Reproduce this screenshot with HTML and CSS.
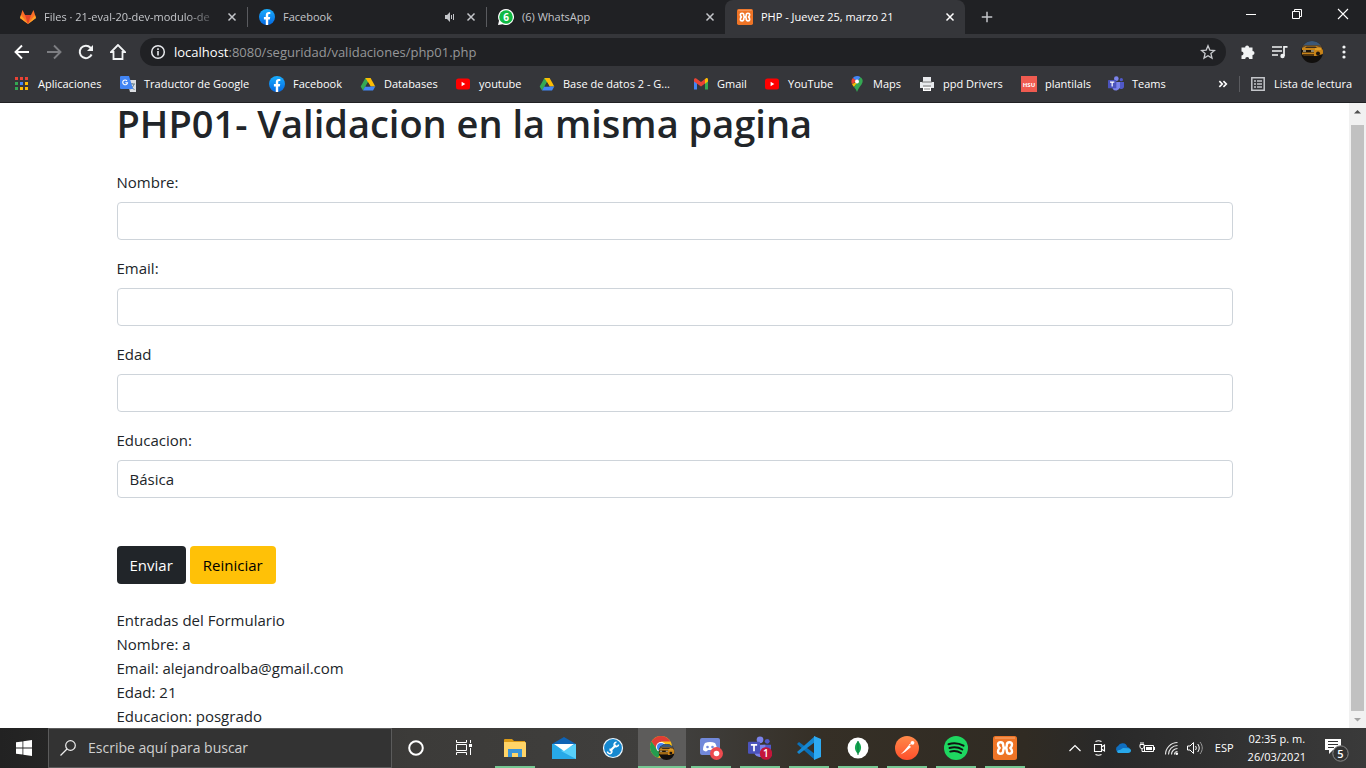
FILE: index.html
```
<!DOCTYPE html>
<html lang="es">
<head>
<meta charset="utf-8">
<meta name="viewport" content="width=device-width, initial-scale=1">
<title>PHP - Juevez 25, marzo 21</title>
<link rel="stylesheet" href="styles.css">
</head>
<body>
<svg class="defs" aria-hidden="true">
  <defs>
    <linearGradient id="fbg" x1="0" y1="0" x2="0" y2="1"><stop offset="0" stop-color="#19aefe"/><stop offset="1" stop-color="#0568e1"/></linearGradient>
    <linearGradient id="pmg" x1="0" y1="0" x2="0" y2="1"><stop offset="0" stop-color="#ff8a4a"/><stop offset="1" stop-color="#ff4f2b"/></linearGradient>
    <symbol id="close" viewBox="0 0 16 16"><path d="M4 4l8 8M12 4l-8 8" stroke="currentColor" stroke-width="1.7"/></symbol>
    <symbol id="fb" viewBox="0 0 16 16"><circle cx="8" cy="8" r="8" fill="url(#fbg)"/><path d="M6.8 16v-5.6H4.9V8h1.9V6.3c0-2.1 1.2-3.2 3-3.2.7 0 1.5.1 1.5.1v1.9h-.9c-.9 0-1.2.5-1.2 1.1V8h2l-.4 2.4H9.2V16z" fill="#fff"/></symbol>
    <symbol id="drive" viewBox="0 0 16 16"><path d="M5.400 2h5.200L5.300 10.700 3 14.500.7 10.600z" fill="#34a853"/><path d="M5.400 2h5.200L15.300 10.600h-4.600z" fill="#fbbc04"/><path d="M5.200 10.600h10.100L13 14.500H3z" fill="#4285f4"/><path d="M8 6.300l2.500 4.300h-5z" fill="#35363a"/></symbol>
    <symbol id="yt" viewBox="0 0 16 16"><rect x="1" y="2.500" width="14" height="11" rx="2.500" fill="#f00"/><path d="M6.600 5.800v4.400L10.300 8z" fill="#fff"/></symbol>
    <symbol id="xampp" viewBox="0 0 24 24"><rect width="24" height="24" rx="2.500" fill="#ee7426"/><path d="M2 2h20" stroke="#f7ad7a"/><path d="M10.200 9.300c0-2-.9-3-2.600-3S5 7.200 5 8.800c0 1.600.8 2.500 1.700 3.200C5.800 12.700 5 13.600 5 15.200c0 1.600.9 2.600 2.600 2.600s2.600-1 2.600-3M13.800 9.300c0-2 .9-3 2.600-3s2.600.9 2.600 2.500c0 1.600-.8 2.500-1.700 3.200.9.700 1.700 1.600 1.700 3.200 0 1.600-.9 2.600-2.600 2.600s-2.600-1-2.600-3M10.200 9c0 1.700.5 3 1.800 3s1.800-1.300 1.800-3M10.200 15c0-1.700.5-3 1.800-3s1.800 1.300 1.800 3" fill="none" stroke="#fff" stroke-width="2.400" stroke-linejoin="round"/></symbol>
    <symbol id="teams" viewBox="0 0 24 24"><circle cx="12.500" cy="4" r="3.500" fill="#7b83eb"/><circle cx="20" cy="5.500" r="2.500" fill="#5059c9"/><path d="M16 9h8v7a4 4 0 0 1-6 3z" fill="#5059c9"/><path d="M7 9h11v8a6 6 0 0 1-11 2z" fill="#7b83eb"/><rect y="6" width="12.500" height="12.500" rx="1" fill="#4b53bc"/><path d="M3 9.300h6.500M6.250 9.300v6.500" stroke="#fff" stroke-width="1.800"/></symbol>
    <clipPath id="disc"><circle cx="11" cy="11" r="11"/></clipPath>
    <symbol id="car" viewBox="0 0 22 22"><g clip-path="url(#disc)"><path d="M0 0h22v22H0z" fill="#110f0d"/><path d="M0 0h22v4.500H0z" fill="#3c5878"/><path d="M0 4h22v3H0z" fill="#5b4a35"/><path d="M1 7l4-2h10l5 1.500 2 2V13l-7 2H3l-2-2z" fill="#c98419"/><path d="M5.500 5.500h9L16 7H4z" fill="#3a2c1c"/><path d="M1 9h12v2.500H1z" fill="#1b140d"/><path d="M2 10h3M10 10h3" stroke="#fff1c8"/><path d="M14 8h6" stroke="#f5b93b"/><path d="M2 14h11" stroke="#2a1c0e" stroke-width="1.500"/><circle cx="17" cy="12.500" r="2" fill="#1b140d"/></g></symbol>
  </defs>
</svg>

<header class="browser">
  <div class="tabstrip">
    <div class="tab">
      <svg class="fav" viewBox="0 0 16 16"><path d="M8 15L0 9 2.500 1 5 6h6l2.500-5L16 9z" fill="#fc6d26"/><path d="M8 15L5 6h6z" fill="#e24329"/><path d="M8 15L0 9l1-3zM8 15l8-6-1-3z" fill="#fca326"/></svg>
      <span class="tab-title fade">Files · 21-eval-20-dev-modulo-de</span>
      <button class="icon-btn" aria-label="Cerrar pestaña"><svg class="x"><use href="#close"/></svg></button>
    </div>
    <div class="tab divided">
      <svg class="fav"><use href="#fb"/></svg>
      <span class="tab-title">Facebook</span>
      <svg class="sound" viewBox="0 0 12 12"><path d="M1 4h2l3-3v10L3 8H1z" fill="#c4c6ca"/><path d="M7.500 4v4M9.500 3v6" stroke="#c4c6ca"/></svg>
      <button class="icon-btn" aria-label="Cerrar pestaña"><svg class="x"><use href="#close"/></svg></button>
    </div>
    <div class="tab divided">
      <svg class="fav" viewBox="0 0 16 16"><path d="M8 0a8 8 0 1 1-3.500 15.200L0 16l1-4.200A8 8 0 0 1 8 0z" fill="#fff"/><circle cx="8" cy="8" r="6.800" fill="#10b943"/><text x="8" y="11.500" text-anchor="middle" class="wa">6</text></svg>
      <span class="tab-title">(6) WhatsApp</span>
      <button class="icon-btn" aria-label="Cerrar pestaña"><svg class="x"><use href="#close"/></svg></button>
    </div>
    <div class="tab active">
      <svg class="fav"><use href="#xampp"/></svg>
      <span class="tab-title">PHP - Juevez 25, marzo 21</span>
      <button class="icon-btn" aria-label="Cerrar pestaña"><svg class="x"><use href="#close"/></svg></button>
    </div>
    <button class="icon-btn new-tab" aria-label="Nueva pestaña"><svg class="x" viewBox="0 0 16 16"><path d="M8 2v12M2 8h12" stroke="currentColor" stroke-width="1.700"/></svg></button>
    <div class="window-controls">
      <button class="icon-btn" aria-label="Minimizar"><svg viewBox="0 0 12 12"><path d="M1 6.500h10" stroke="#fff"/></svg></button>
      <button class="icon-btn" aria-label="Restaurar"><svg viewBox="0 0 12 12"><path d="M1.500 3.500h7v7h-7zM3.500 3.500v-2h7v7h-2" fill="none" stroke="#fff"/></svg></button>
      <button class="icon-btn" aria-label="Cerrar"><svg viewBox="0 0 12 12"><path d="M1 1l10 10M11 1L1 11" stroke="#fff" stroke-width="1.100"/></svg></button>
    </div>
  </div>

  <div class="toolbar">
    <button class="icon-btn" aria-label="Atrás"><svg viewBox="0 0 16 16"><path d="M15 8H2M8 1.500L1.500 8 8 14.500" fill="none" stroke="#fff" stroke-width="1.900"/></svg></button>
    <button class="icon-btn" aria-label="Adelante"><svg viewBox="0 0 16 16"><path d="M1 8h13M8 1.500L14.500 8 8 14.500" fill="none" stroke="#7d7e82" stroke-width="1.900"/></svg></button>
    <button class="icon-btn" aria-label="Recargar"><svg viewBox="0 0 16 16"><path d="M13.600 10.500A6.200 6.200 0 1 1 12.500 3.700L14 5.200" fill="none" stroke="#f1f3f4" stroke-width="2"/><path d="M15 1v6H9z" fill="#f1f3f4"/></svg></button>
    <button class="icon-btn" aria-label="Inicio"><svg viewBox="0 0 16 16"><path d="M8 1L1 8h2.500v7h9V8H15z" fill="none" stroke="#f1f3f4" stroke-width="1.800"/></svg></button>
    <div class="omnibox">
      <svg viewBox="0 0 16 16"><circle cx="8" cy="8" r="6.300" fill="none" stroke="#e8eaed" stroke-width="1.500"/><path d="M8 7v4.500M8 4.300v1.600" stroke="#e8eaed" stroke-width="1.600"/></svg>
      <span class="url"><b>localhost</b>:8080/seguridad/validaciones/php01.php</span>
      <button class="icon-btn" aria-label="Marcar página"><svg viewBox="0 0 16 16"><path d="M8 1.800l1.800 4.300 4.700.4-3.600 3 1.100 4.600L8 11.700l-4 2.400 1.100-4.600-3.600-3 4.700-.4z" fill="none" stroke="#c8cace" stroke-width="1.300"/></svg></button>
    </div>
    <div class="extensions">
      <button class="icon-btn" aria-label="Extensiones"><svg viewBox="0 0 16 16"><path d="M1.500 3.500h3.600a2 2 0 1 1 4 0h3.400v3.600a2 2 0 1 1 0 4V15H9.200a2 2 0 0 0-4 0H1.500v-3.600a2 2 0 0 0 0-4z" fill="#f1f3f4"/></svg></button>
      <button class="icon-btn" aria-label="Controles multimedia"><svg viewBox="0 0 16 16"><path d="M0 3h10M0 7h10M0 11h6" stroke="#f1f3f4" stroke-width="1.500"/><circle cx="10.500" cy="12" r="2.200" fill="#f1f3f4"/><path d="M12 12V2.800h3.500" fill="none" stroke="#f1f3f4" stroke-width="1.700"/></svg></button>
      <button class="icon-btn avatar" aria-label="Perfil"><svg><use href="#car"/></svg></button>
      <button class="icon-btn" aria-label="Menú"><svg viewBox="0 0 16 16" fill="#f1f3f4"><circle cx="8" cy="3" r="1.600"/><circle cx="8" cy="8" r="1.600"/><circle cx="8" cy="13" r="1.600"/></svg></button>
    </div>
  </div>

  <nav class="bookmarks" aria-label="Marcadores">
    <div class="bookmark-list">
      <a href="#"><svg viewBox="0 0 16 16"><path fill="#ea4335" d="M1 1h3v3H1zM6 1h3v3H6zM11 1h3v3h-3z"/><path fill="#34a853" d="M1 6h3v3H1zM1 11h3v3H1z"/><path fill="#4285f4" d="M6 6h3v3H6z"/><path fill="#fbbc04" d="M11 6h3v3h-3zM6 11h3v3H6zM11 11h3v3h-3z"/></svg>Aplicaciones</a>
      <a href="#"><svg viewBox="0 0 16 16"><path d="M7 4h9v12H10z" fill="#dadce0"/><path d="M9 8h6M12 7v1M14 8c-1 3-2 4-4 5M10.500 9.500c1 2 2 3 4 4" stroke="#607d8b" fill="none"/><path d="M1 0h8l4 13H1a1 1 0 0 1-1-1V1a1 1 0 0 1 1-1z" fill="#4285f4"/><path d="M7 4.800a2.400 2.400 0 1 0 .5 2H5.300" stroke="#fff" stroke-width="1.100" fill="none"/></svg>Traductor de Google</a>
      <a href="#"><svg><use href="#fb"/></svg>Facebook</a>
      <a href="#"><svg><use href="#drive"/></svg>Databases</a>
      <a href="#"><svg><use href="#yt"/></svg>youtube</a>
      <a href="#"><svg><use href="#drive"/></svg>Base de datos 2 - G...</a>
      <a href="#"><svg viewBox="0 0 16 16"><path d="M1 4v9.500h3V7z" fill="#4285f4"/><path d="M15 4v9.500h-3V7z" fill="#34a853"/><path d="M1 3.500c0-1 1.200-1.800 2.300-1L8 6l4-3v4.500l-4 3-7-5z" fill="#ea4335"/><path d="M12 3l.8-.6c1-.7 2.200 0 2.200 1.100v2l-3 2.200z" fill="#fbbc04"/></svg>Gmail</a>
      <a href="#"><svg><use href="#yt"/></svg>YouTube</a>
      <a href="#"><svg viewBox="0 0 16 16"><path d="M8 0a5.500 5.500 0 0 0-4.200 2L8 6l3.500-4.700A5 5 0 0 0 8 0z" fill="#4285f4"/><path d="M3.800 2a5.500 5.500 0 0 0-.8 6l5-3z" fill="#ea4335"/><path d="M3 8c.5 1 1 2 2 3l5-6z" fill="#fbbc04"/><path d="M11.500 1.300c3 2 2.500 5 1 7.200S9.500 12 8 16c-.8-2-1.600-3.500-3-5z" fill="#34a853"/><circle cx="8" cy="5.500" r="2" fill="#fff"/></svg>Maps</a>
      <a href="#"><svg viewBox="0 0 16 16"><path d="M4 1h8v5H4zM1 6h14v6H1z" fill="#e8eaed"/><path d="M3 6h10M4 10h8" stroke="#777"/><path d="M4 11h8v4H4z" fill="#fff"/><path d="M5 13h6" stroke="#888"/></svg>ppd Drivers</a>
      <a href="#"><svg viewBox="0 0 16 16"><rect width="16" height="16" fill="#ef5b50"/><text x="8" y="10.500" text-anchor="middle" class="hsu">HSU</text></svg>plantilals</a>
      <a href="#"><svg><use href="#teams"/></svg>Teams</a>
    </div>
    <button class="icon-btn more" aria-label="Más marcadores"><svg viewBox="0 0 12 12"><path d="M2 3.500L4.500 6 2 8.500M5.500 3.500L8 6 5.500 8.500" fill="none" stroke="#fff" stroke-width="1.400"/></svg></button>
    <a href="#" class="reading"><svg viewBox="0 0 16 16"><path d="M1.800 1.800h12.400v12.400H1.800z" fill="none" stroke="#c4c6ca" stroke-width="1.500"/><path d="M4 5h2M7 5h5M4 8h2M7 8h5M4 11h2M7 11h5" stroke="#c4c6ca" stroke-width="1.400"/></svg>Lista de lectura</a>
  </nav>
</header>

<div class="viewport">
  <main class="page">
    <div class="container">
      <h1>PHP01- Validacion en la misma pagina</h1>
      <form onsubmit="return false">
        <div class="field"><label for="nombre">Nombre:</label><input id="nombre" type="text"></div>
        <div class="field"><label for="email">Email:</label><input id="email" type="text"></div>
        <div class="field"><label for="edad">Edad</label><input id="edad" type="text"></div>
        <div class="field"><label for="educacion">Educacion:</label>
          <select id="educacion"><option>Básica</option></select></div>
        <div class="actions">
          <button type="submit" class="btn dark">Enviar</button>
          <button type="reset" class="btn warning">Reiniciar</button>
        </div>
      </form>
      <div class="result">
        <div>Entradas del Formulario</div>
        <div>Nombre: a</div>
        <div>Email: alejandroalba@gmail.com</div>
        <div>Edad: 21</div>
        <div>Educacion: posgrado</div>
      </div>
    </div>
  </main>
  <div class="scrollbar" aria-hidden="true">
    <svg viewBox="0 0 17 17"><path d="M5 10.500h7L8.500 7z" fill="#505050"/></svg>
    <div class="thumb"></div>
    <svg viewBox="0 0 17 17"><path d="M5 7h7l-3.500 3.500z" fill="#a3a3a3"/></svg>
  </div>
</div>

<footer class="taskbar">
  <button class="icon-btn start" aria-label="Inicio"><svg viewBox="0 0 16 16" fill="#fff"><path d="M0 2.300l6.500-.9v6.200H0zM7.300 1.300L16 0v7.600H7.300zM0 8.400h6.500v6.200L0 13.700zM7.300 8.400H16V16l-8.700-1.300z"/></svg></button>
  <label class="search">
    <svg viewBox="0 0 16 16"><circle cx="10.500" cy="5.500" r="4.800" fill="none" stroke="#eee" stroke-width="1.200"/><path d="M7 9L.5 15.500" stroke="#eee" stroke-width="1.300"/></svg>
    <input type="text" placeholder="Escribe aquí para buscar" aria-label="Buscar">
  </label>
  <div class="system-apps">
    <button class="app" aria-label="Cortana"><svg viewBox="0 0 24 24"><circle cx="12" cy="12" r="6.800" fill="none" stroke="#fff" stroke-width="2"/></svg></button>
    <button class="app" aria-label="Vista de tareas"><svg viewBox="0 0 24 24"><path d="M4.500 4v2.500h10V4M4.500 19v-2.500h10V19M4.500 8.500h10v6h-10zM18.500 4v3M18.500 12v7" fill="none" stroke="#fff"/><path d="M17 8h3v3h-3z" fill="#fff"/></svg></button>
  </div>
  <div class="apps">
    <button class="app running" aria-label="Explorador"><svg viewBox="0 0 24 24"><path d="M1 4a1 1 0 0 1 1-1h7l2 2H22v5H1z" fill="#dc9b16"/><path d="M1 6h21a1 1 0 0 1 1 1v14H1z" fill="#ffd467"/><path d="M5 13h14v8h-4v-4H9v4H5z" fill="#3a94d8"/></svg></button>
    <button class="app" aria-label="Correo"><svg viewBox="0 0 24 24"><path d="M0 8l12-7 12 7z" fill="#0f63b5"/><path d="M0 8h24v15H0z" fill="#27a9e8"/><path d="M24 8v15L9 15z" fill="#58d0fa"/><path d="M2 8h20l-10 7z" fill="#fff"/></svg></button>
    <button class="app" aria-label="Herramientas"><svg viewBox="0 0 24 24"><circle cx="12" cy="12" r="9.500" fill="#1588d0" stroke="#eef6fb" stroke-width="1.200"/><path d="M9 15l6-6" stroke="#fff" stroke-width="2.200"/><path d="M17.500 8.500a2.200 2.200 0 1 1-2-2.200M6.500 15.500a2.200 2.200 0 1 0 2-2.200" fill="none" stroke="#fff" stroke-width="1.500"/></svg></button>
    <button class="app running current" aria-label="Google Chrome"><svg viewBox="0 0 26 24"><circle cx="12" cy="11" r="11" fill="#fbc116"/><path d="M2.500 5.500a11 11 0 0 1 19 0H12L8 14z" fill="#df3d35"/><path d="M2.500 5.500L9 15l4 1-4 5.600A11 11 0 0 1 2.500 5.500z" fill="#249b50"/><circle cx="12" cy="11" r="5" fill="#fff"/><circle cx="12" cy="11" r="4" fill="#4285f4"/><use href="#car" x="9.500" y="8" width="16" height="16"/></svg></button>
    <button class="app running" aria-label="Discord"><svg viewBox="0 0 24 24"><path d="M3 2h16a2 2 0 0 1 2 2v18l-4-3H3a2 2 0 0 1-2-2V4a2 2 0 0 1 2-2z" fill="#7289da"/><path d="M6 7c3-1.500 7-1.500 10 0 1.500 2 2 5 2 7-1 1-3 2-4 1l-1-1H9l-1 1c-1 1-3 0-4-1 0-2 .5-5 2-7z" fill="#fff"/><circle cx="8.500" cy="11" r="1.300" fill="#7289da"/><circle cx="13.500" cy="11" r="1.300" fill="#7289da"/><circle cx="17.500" cy="17.500" r="6.500" fill="#ed4b4f"/><circle cx="17.500" cy="17.500" r="2.800" fill="#fff"/></svg></button>
    <button class="app running" aria-label="Teams"><svg viewBox="0 0 26 26"><use href="#teams" width="25" height="25"/><circle cx="19.500" cy="19" r="6.800" fill="#c4153a"/><text x="19.500" y="23" text-anchor="middle" class="badge-text">1</text></svg></button>
    <button class="app running" aria-label="Visual Studio Code"><svg viewBox="0 0 24 24"><path d="M0 8l2-2L18 18v6z" fill="#0a70b8"/><path d="M0 16l2 2L18 6V0z" fill="#1688d2"/><path d="M17 0v24l7-3V3z" fill="#2daaf2"/></svg></button>
    <button class="app running" aria-label="MongoDB"><svg viewBox="0 0 24 24"><circle cx="12" cy="12" r="10.500" fill="#fff"/><path d="M12 5c4.200 4.500 4 9 0 13-4-4-4.200-8.500 0-13z" fill="#13a852"/><path d="M12 5v14" stroke="#0b7b3d"/></svg></button>
    <button class="app running" aria-label="Postman"><svg viewBox="0 0 24 24"><circle cx="12" cy="12" r="12" fill="url(#pmg)"/><path d="M5.500 18.500L9 15l5-6 2 2-6 5z" fill="#fff"/><path d="M14 9l2.500-1.500" stroke="#fff"/><circle cx="17.500" cy="6.800" r="1.900" fill="#fff"/></svg></button>
    <button class="app running" aria-label="Spotify"><svg viewBox="0 0 24 24"><circle cx="12" cy="12" r="12" fill="#1ed760"/><path d="M4.500 8.200c5-1.500 10.500-1 15 1.500M5.500 12c4.300-1.200 9-.8 12.800 1.500M6.200 15.600c3.600-1 7.500-.6 10.800 1.400" fill="none" stroke="#111" stroke-width="2" stroke-linecap="round"/></svg></button>
    <button class="app running" aria-label="XAMPP"><svg><use href="#xampp"/></svg></button>
  </div>
  <div class="tray">
    <svg viewBox="0 0 16 16"><path d="M2.500 11L8 5.500 13.500 11" fill="none" stroke="#fff" stroke-width="1.200"/></svg>
    <svg viewBox="0 0 16 16"><path d="M3.500 4.500h7v7h-7zM10.500 7l3-2v6l-3-2M4.500 1.500c2-1 4-1 6 0M4.500 14.500c2 1 4 1 6 0" fill="none" stroke="#fff" stroke-width="1.100"/></svg>
    <svg viewBox="0 0 16 16"><path d="M3.500 12.500A3.500 3.500 0 0 1 3 6a5 5 0 0 1 9.300 1A3 3 0 0 1 13 12.800z" fill="#0f6fc0"/><path d="M3 13c-2-2 0-3 2-3l3-2 5 .2c4 0 4 4.800 0 4.800z" fill="#28a8ea"/></svg>
    <svg viewBox="0 0 16 16"><path d="M5.500 5.500h9v6h-9zM1 4.500h4v3l-2 1.500-2-1.500zM2 2v2.500M4 2v2.500M3 9v2.500h3" fill="none" stroke="#fff"/><path d="M7 7h6v3H7z" fill="#fff"/><path d="M15.500 7v3" stroke="#fff"/></svg>
    <svg viewBox="0 0 16 16"><g fill="none" stroke="#e8e8e8" stroke-width="1.100"><path d="M2.500 14.500a12 12 0 0 1 12-12M5.500 14.500a9 9 0 0 1 9-9M8.500 14.500a6 6 0 0 1 6-6M11.500 14.500a3 3 0 0 1 3-3"/></g><circle cx="13.800" cy="13.800" r="1.300" fill="#fff"/></svg>
    <svg viewBox="0 0 16 16"><path d="M.5 6h2.500l3.500-3.500v11L3 10H.5z" fill="none" stroke="#fff"/><path d="M8.500 6c1 1.500 1 2.500 0 4M10.700 4c2 2.500 2 5.500 0 8" fill="none" stroke="#fff"/><path d="M13 2c3 4 3 8 0 12" fill="none" stroke="#999"/></svg>
  </div>
  <span class="lang">ESP</span>
  <time class="clock" datetime="2021-03-26T14:35"><span>02:35 p. m.</span><span>26/03/2021</span></time>
  <button class="icon-btn notices" aria-label="Notificaciones"><svg viewBox="0 0 28 28"><path d="M2 5h16v11H10l-4 4v-4H2z" fill="#fff"/><path d="M5 7.500h10M5 10.500h10M5 13.500h6" stroke="#333"/><circle cx="17.500" cy="19.500" r="7.700" fill="#333" stroke="#8a8a8a"/><text x="17.500" y="23.500" text-anchor="middle" class="badge-text">5</text></svg></button>
</footer>
</body>
</html>
```
FILE: styles.css
```
* { box-sizing: border-box; }
body {
  margin: 0;
  height: 100vh;
  display: flex;
  flex-direction: column;
  overflow: hidden;
  background: #fff;
  color: #212529;
  font: 15px/24px "Open Sans", "Noto Sans", sans-serif;
}
.defs { position: absolute; width: 0; height: 0; }
svg { display: block; flex: none; width: 16px; height: 16px; }
button, input, select { font: inherit; color: inherit; }
a { color: inherit; text-decoration: none; }
.icon-btn {
  display: grid;
  place-items: center;
  flex: none;
  padding: 0;
  border: 0;
  background: none;
  color: #c4c6ca;
}

/* Browser frame */
.browser {
  flex: none;
  background: #35363a;
  border-bottom: 1px solid #202124;
  color: #fff;
  font-size: 12px;
  line-height: 16px;
}
.tabstrip { display: flex; height: 34px; padding-left: 8px; background: #202124; }
.tab {
  display: flex;
  align-items: center;
  flex: 0 1 239px;
  min-width: 0;
  padding: 0 8px 0 12px;
  color: #c4c6ca;
  font-size: 11px;
}
.divided { background: linear-gradient(#5a5b5f, #5a5b5f) 0 50% / 1px 20px no-repeat; }
.tab-title { flex: 1; min-width: 0; margin: 0 4px 0 8px; white-space: nowrap; }
.fade { mask-image: linear-gradient(90deg, #000 80%, transparent); }
.sound { width: 12px; height: 12px; margin-right: 8px; }
.x { width: 14px; height: 14px; }
.active { flex-basis: 240px; border-radius: 8px 8px 0 0; background: #35363a; color: #fff; }
.active .icon-btn { color: #fff; }
.new-tab { width: 44px; }
.window-controls { display: flex; height: 28px; margin-left: auto; }
.window-controls .icon-btn { width: 46px; }
.window-controls svg { width: 12px; height: 12px; }

.toolbar { display: flex; align-items: center; height: 36px; padding-left: 6px; }
.toolbar > .icon-btn { width: 32px; height: 32px; }
.omnibox {
  display: flex;
  align-items: center;
  flex: 1;
  height: 28px;
  margin-left: 6px;
  padding: 0 10px;
  border-radius: 14px;
  background: #202124;
}
.url { flex: 1; margin-left: 8px; color: #969799; font-size: 13px; }
.url b { color: #fff; font-weight: 400; }
.extensions { display: flex; align-items: center; padding: 0 6px; }
.extensions .icon-btn { width: 32px; }
.avatar svg { width: 22px; height: 22px; }

.bookmarks { display: flex; align-items: center; height: 32px; padding: 0 14px 4px; font-size: 11px; }
.bookmark-list {
  display: grid;
  grid-template-columns: 106px 149px 91px 95px 84px 154px 71px 85px 70px 102px 87px 60px;
}
.bookmarks a { display: flex; align-items: center; gap: 8px; white-space: nowrap; }
.more { margin: 0 8px 0 auto; }
.more svg { width: 14px; height: 14px; }
.bookmarks .reading { padding-left: 10px; border-left: 1px solid #5a5b5f; }
.wa { fill: #fff; font-size: 10px; font-weight: 700; }
.hsu { fill: #fff; font-size: 6px; font-weight: 700; }

/* Web page */
.viewport { display: flex; flex: 1; min-height: 0; }
.page { flex: 1; min-width: 0; }
.container { max-width: 1140px; margin: 0 auto; padding: 0 12px; }
h1 { margin: 0 0 26px; font-size: 38px; line-height: 41px; font-weight: 600; }
.field { margin-bottom: 16px; }
label { display: block; }
.field label { margin-bottom: 8px; }
.field input, .field select {
  display: block;
  width: 100%;
  height: 38px;
  padding: 0 12px;
  border: 1px solid #ced4da;
  border-radius: 4px;
  background: #fff;
  appearance: none;
}
.actions { display: flex; gap: 4px; margin: 48px 0 24px; }
.btn { height: 38px; padding: 0 13px; border: 0; border-radius: 4px; }
.dark { background: #212529; color: #fff; }
.warning { background: #ffc107; color: #000; }

.scrollbar { display: flex; flex-direction: column; width: 17px; background: #f1f1f1; }
.scrollbar svg { width: 17px; height: 17px; }
.thumb { flex: 1; margin: 5px 2px 0; background: #c1c1c1; }

/* Windows taskbar */
.taskbar {
  display: flex;
  flex: none;
  height: 40px;
  background: linear-gradient(90deg, #222 0, #3c3b39 30%, #403f3d 50%, #352f26 60%, #302b23 75%, #292929 81%, #3a3a3a 100%);
  color: #fff;
  font-size: 11px;
}
.start { width: 48px; }
.search {
  display: flex;
  align-items: center;
  flex: 0 1 344px;
  gap: 12px;
  padding: 0 11px;
  border: 1px solid #5b5b5b;
  background: #333;
}
.search input { flex: 1; min-width: 0; padding: 0; border: 0; outline: 0; background: none; font-size: 14px; }
.search input::placeholder { color: #d0d0d0; opacity: 1; }
.system-apps { display: flex; }
.apps { display: flex; gap: 1px; margin-left: 3px; }
.app {
  display: grid;
  place-items: center;
  width: 48px;
  padding: 0;
  border: 0;
  background: none;
}
.app svg { width: 24px; height: 24px; }
.running { background: linear-gradient(#76c893, #76c893) 50% 100% / 40px 2px no-repeat; }
.current { background: linear-gradient(#76c893, #76c893) 50% 100% / 48px 2px no-repeat, #5d5c5b; }
.app.current svg { width: 26px; }
.tray { display: flex; align-items: center; gap: 8px; margin-left: auto; }
.lang { align-self: center; margin: 0 14px 0 12px; }
.clock { display: flex; flex-direction: column; align-items: center; justify-content: center; line-height: 18px; }
.notices { width: 44px; margin: 0 7px 0 9px; }
.notices svg { width: 28px; height: 28px; }
.badge-text { fill: #fff; font-size: 11px; font-weight: 600; }
```
